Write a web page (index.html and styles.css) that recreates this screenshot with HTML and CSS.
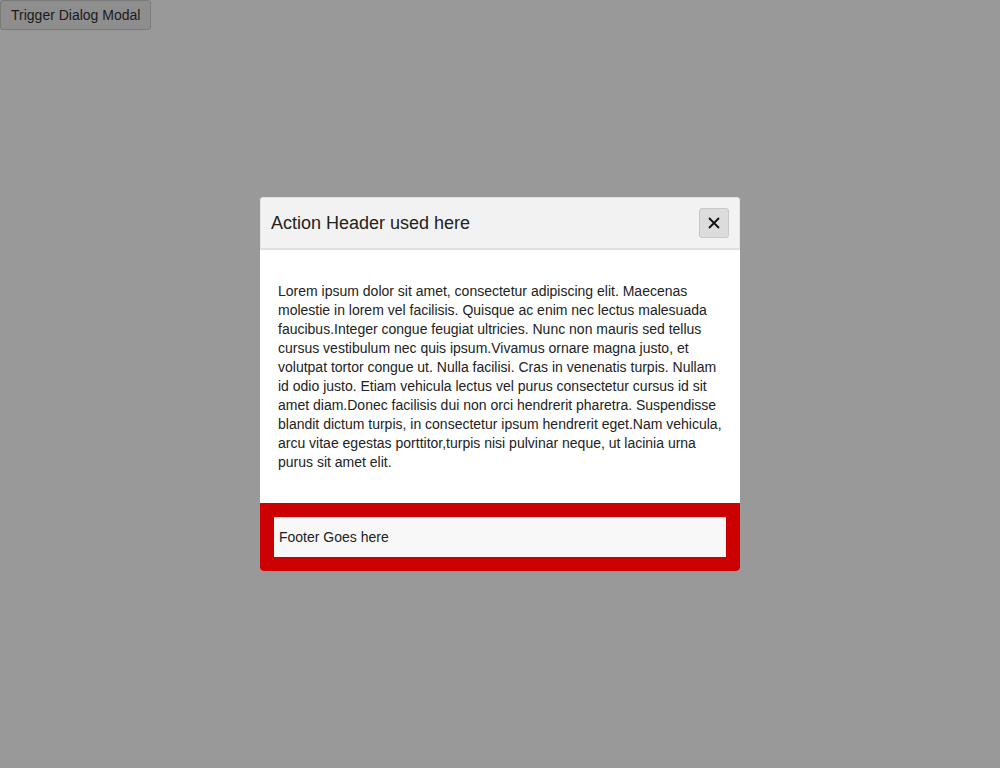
FILE: index.html
```html
<!DOCTYPE html>
<html>
<head>
<meta charset="utf-8">
<link rel="stylesheet" href="styles.css">
</head>
<body>
<button class="trigger">Trigger Dialog Modal</button>
<div class="overlay">
  <div class="dialog">
    <div class="dialog-header">
      <h2 class="dialog-title">Action Header used here</h2>
      <button class="close-btn" aria-label="Close">
        <svg width="14" height="14" viewBox="0 0 14 14"><path d="M2 2 L12 12 M12 2 L2 12" stroke="#111" stroke-width="1.8" fill="none"/></svg>
      </button>
    </div>
    <div class="dialog-body">
      <p>Lorem ipsum dolor sit amet, consectetur adipiscing elit. Maecenas molestie in lorem vel facilisis. Quisque ac enim nec lectus malesuada faucibus.Integer congue feugiat ultricies. Nunc non mauris sed tellus cursus vestibulum nec quis ipsum.Vivamus ornare magna justo, et volutpat tortor congue ut. Nulla facilisi. Cras in venenatis turpis. Nullam id odio justo. Etiam vehicula lectus vel purus consectetur cursus id sit amet diam.Donec facilisis dui non orci hendrerit pharetra. Suspendisse blandit dictum turpis, in consectetur ipsum hendrerit eget.Nam vehicula, arcu vitae egestas porttitor,turpis nisi pulvinar neque, ut lacinia urna purus sit amet elit.</p>
    </div>
    <div class="dialog-footer">
      <div class="footer-inner">Footer Goes here</div>
    </div>
  </div>
</div>
</body>
</html>
```

FILE: styles.css
```css
html, body {
  margin: 0;
  padding: 0;
  height: 100%;
}
body {
  background: #999999;
  font-family: "Liberation Sans", Arial, sans-serif;
  color: #222;
}
.trigger {
  position: absolute;
  top: 0;
  left: 0;
  height: 30px;
  padding: 0 10px;
  white-space: nowrap;
  font-family: "Liberation Sans", Arial, sans-serif;
  font-size: 14px;
  color: #1a1a1a;
  background: #8e8e8e;
  border: 1px solid #7a7a7a;
  border-radius: 3px;
}
.overlay {
  height: 100%;
  display: flex;
  align-items: center;
  justify-content: center;
}
.dialog {
  width: 480px;
  background: #fff;
  border-radius: 4px;
  display: flex;
  flex-direction: column;
}
.dialog-header {
  display: flex;
  align-items: center;
  justify-content: space-between;
  background: #f2f2f2;
  border: 1px solid #e2e2e2;
  border-bottom: 2px solid #e0e0e0;
  border-radius: 4px 4px 0 0;
  padding: 10px 10px 10px 10px;
  height: 30px;
}
.dialog-title {
  margin: 0;
  font-size: 18px;
  font-weight: normal;
  color: #222;
}
.close-btn {
  width: 30px;
  height: 30px;
  padding: 0;
  display: flex;
  align-items: center;
  justify-content: center;
  background: #dcdcdc;
  border: 1px solid #c8c8c8;
  border-radius: 3px;
}
.dialog-body {
  padding: 32px 18px 31px 18px;
}
.dialog-body p {
  margin: 0;
  font-size: 14px;
  line-height: 19px;
  color: #222;
}
.dialog-footer {
  background: #cc0000;
  padding: 14px;
  border-radius: 0 0 4px 4px;
}
.footer-inner {
  background: #f8f8f8;
  border-top: 1px solid #dcdcdc;
  height: 37px;
  display: flex;
  align-items: center;
  padding: 0 5px 2px 5px;
  font-size: 14px;
  color: #222;
}
```
